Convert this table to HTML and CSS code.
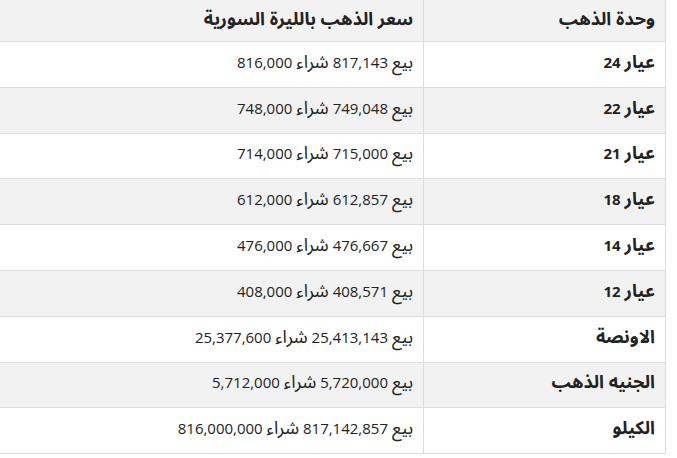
FILE: index.html
```html
<!DOCTYPE html>
<html lang="ar" dir="rtl">
<head>
<meta charset="utf-8">
<link rel="stylesheet" href="styles.css">
</head>
<body>
<div class="wrap">
<table class="gold">
<thead>
<tr><th class="unit">وحدة الذهب</th><th>سعر الذهب بالليرة السورية</th></tr>
</thead>
<tbody>
<tr><td class="unit"><span class="ar">عيار</span> 24</td><td><span class="ar">بيع</span> 817,143 <span class="ar">شراء</span> 816,000</td></tr>
<tr><td class="unit"><span class="ar">عيار</span> 22</td><td><span class="ar">بيع</span> 749,048 <span class="ar">شراء</span> 748,000</td></tr>
<tr><td class="unit"><span class="ar">عيار</span> 21</td><td><span class="ar">بيع</span> 715,000 <span class="ar">شراء</span> 714,000</td></tr>
<tr><td class="unit"><span class="ar">عيار</span> 18</td><td><span class="ar">بيع</span> 612,857 <span class="ar">شراء</span> 612,000</td></tr>
<tr><td class="unit"><span class="ar">عيار</span> 14</td><td><span class="ar">بيع</span> 476,667 <span class="ar">شراء</span> 476,000</td></tr>
<tr><td class="unit"><span class="ar">عيار</span> 12</td><td><span class="ar">بيع</span> 408,571 <span class="ar">شراء</span> 408,000</td></tr>
<tr><td class="unit"><span class="ar">الاونصة</span></td><td><span class="ar">بيع</span> 25,413,143 <span class="ar">شراء</span> 25,377,600</td></tr>
<tr><td class="unit"><span class="ar">الجنيه الذهب</span></td><td><span class="ar">بيع</span> 5,720,000 <span class="ar">شراء</span> 5,712,000</td></tr>
<tr><td class="unit"><span class="ar">الكيلو</span></td><td><span class="ar">بيع</span> 817,142,857 <span class="ar">شراء</span> 816,000,000</td></tr>
</tbody>
</table>
</div>
</body>
</html>
```
FILE: styles.css
```css
html, body {
  margin: 0;
  padding: 0;
  background: #fff;
}
body {
  font-family: "Open Sans", "Noto Sans Arabic", "DejaVu Sans", sans-serif;
  font-size: 15px;
  color: #222;
}
.wrap {
  direction: rtl;
  padding-right: 11px;
  overflow: hidden;
  width: 666px;
}
.gold {
  border-collapse: collapse;
  width: 700px;
  table-layout: fixed;
}
.gold th,
.gold td {
  border: 1px solid #ddd;
  text-align: right;
  padding: 0 10px 4px;
  line-height: 21px;
  white-space: nowrap;
}
.gold th {
  border-top: none;
  background: #f2f2f2;
  height: 37px;
  font-weight: bold;
  font-size: 18px;
}
.gold th.unit,
.gold td.unit {
  width: 221px;
}
.gold td {
  height: 40.8px;
}
.gold td.unit {
  font-weight: bold;
}
.gold tbody tr:nth-child(even) td {
  background: #f2f2f2;
}
.ar {
  font-size: 18px;
  line-height: 0;
}
```
